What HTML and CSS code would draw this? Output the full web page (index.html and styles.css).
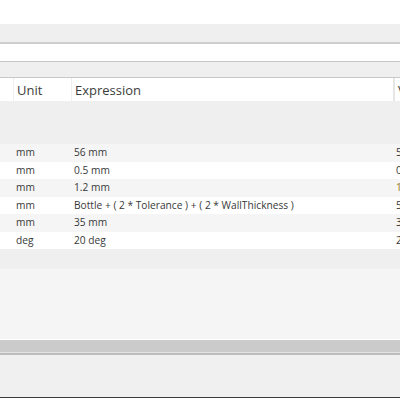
FILE: index.html
```html
<!DOCTYPE html>
<html lang="en">
<head>
    <meta charset="UTF-8">
    <meta name="viewport" content="width=device-width, initial-scale=1.0">
    <title>Parameters</title>
    <link rel="stylesheet" href="styles.css">
</head>
<body>
    <div class="dialog">
        <div class="title-strip"></div>
        <div class="toolbar"></div>
        <div class="search-bar"></div>
        <div class="filter-bar"></div>

        <div class="param-table">
            <div class="head-row">
                <div class="cell"></div>
                <div class="cell">Unit</div>
                <div class="cell">Expression</div>
                <div class="cell">Value</div>
            </div>

            <div class="group-gap"></div>

            <div class="row">
                <div class="cell"></div>
                <div class="cell">mm</div>
                <div class="cell">56 mm</div>
                <div class="cell">56.00</div>
            </div>
            <div class="row">
                <div class="cell"></div>
                <div class="cell">mm</div>
                <div class="cell">0.5 mm</div>
                <div class="cell">0.50</div>
            </div>
            <div class="row">
                <div class="cell"></div>
                <div class="cell">mm</div>
                <div class="cell">1.2 mm</div>
                <div class="cell value-warn">1.20</div>
            </div>
            <div class="row">
                <div class="cell"></div>
                <div class="cell">mm</div>
                <div class="cell">Bottle + ( 2 * Tolerance ) + ( 2 * WallThickness )</div>
                <div class="cell">59.40</div>
            </div>
            <div class="row">
                <div class="cell"></div>
                <div class="cell">mm</div>
                <div class="cell">35 mm</div>
                <div class="cell">35.00</div>
            </div>
            <div class="row">
                <div class="cell"></div>
                <div class="cell">deg</div>
                <div class="cell">20 deg</div>
                <div class="cell">20.0</div>
            </div>

            <div class="table-foot"></div>
        </div>

        <div class="notes"></div>
        <div class="splitter"></div>
        <div class="button-area"></div>
        <div class="frame-edge"></div>
    </div>
</body>
</html>
```

FILE: styles.css
```css
body {
    margin: 0;
    font-family: 'Open Sans', 'Noto Sans', sans-serif;
    background: #fff;
    overflow: hidden;
}

.dialog {
    width: 400px;
    height: 400px;
    overflow: hidden;
    display: flex;
    flex-direction: column;
}

.title-strip {
    height: 24px;
    background: #fff;
}

.toolbar {
    height: 18px;
    background: #efefef;
    border-bottom: 2px solid #cecece;
}

.search-bar {
    height: 17px;
    background: #fff;
    border-bottom: 1px solid #c6c6c6;
}

.filter-bar {
    height: 15px;
    background: #efefef;
    border-bottom: 1px solid #c8c8c8;
}

/* parameter grid */
.param-table {
    width: 460px;
    background: #efefef;
}

.head-row,
.row {
    display: grid;
    grid-template-columns: 14px 58px 323px 65px;
}

.head-row {
    height: 23px;
    background: #fff;
    color: #3c3c3c;
    font-size: 13px;
    line-height: 21px;
}

.head-row .cell {
    padding: 2px 0 0 3px;
    border-right: 1px solid #efefef;
}

.head-row .cell:nth-child(3) {
    border-right: 2px solid #e6e6e6;
}

.group-gap {
    height: 43px;
}

.row {
    height: 17.5px;
    font-size: 10.2px;
    line-height: 17px;
    color: #383838;
}

.row:nth-of-type(odd) {
    background: #f5f5f5;
}

.row:nth-of-type(even) {
    background: #fff;
}

.row .cell {
    padding-left: 2px;
    white-space: nowrap;
}

.row .cell:nth-child(4) {
    padding-left: 1px;
}

.value-warn {
    color: #9a7a14;
}

.table-foot {
    height: 20px;
    border-bottom: 1px solid #f7f7f7;
}

.notes {
    height: 69px;
    background: #f5f5f5;
    border-bottom: 1px solid #fff;
}

.splitter {
    height: 12px;
    background: #cbcbcb;
    border-bottom: 1px solid #e2e2e2;
    box-shadow: 0 2px 0 #bdbdbd;
}

.button-area {
    height: 42px;
    margin-top: 2px;
    background: #f0f0f0;
}

.frame-edge {
    height: 1px;
    background: #3a3a3a;
}
```
